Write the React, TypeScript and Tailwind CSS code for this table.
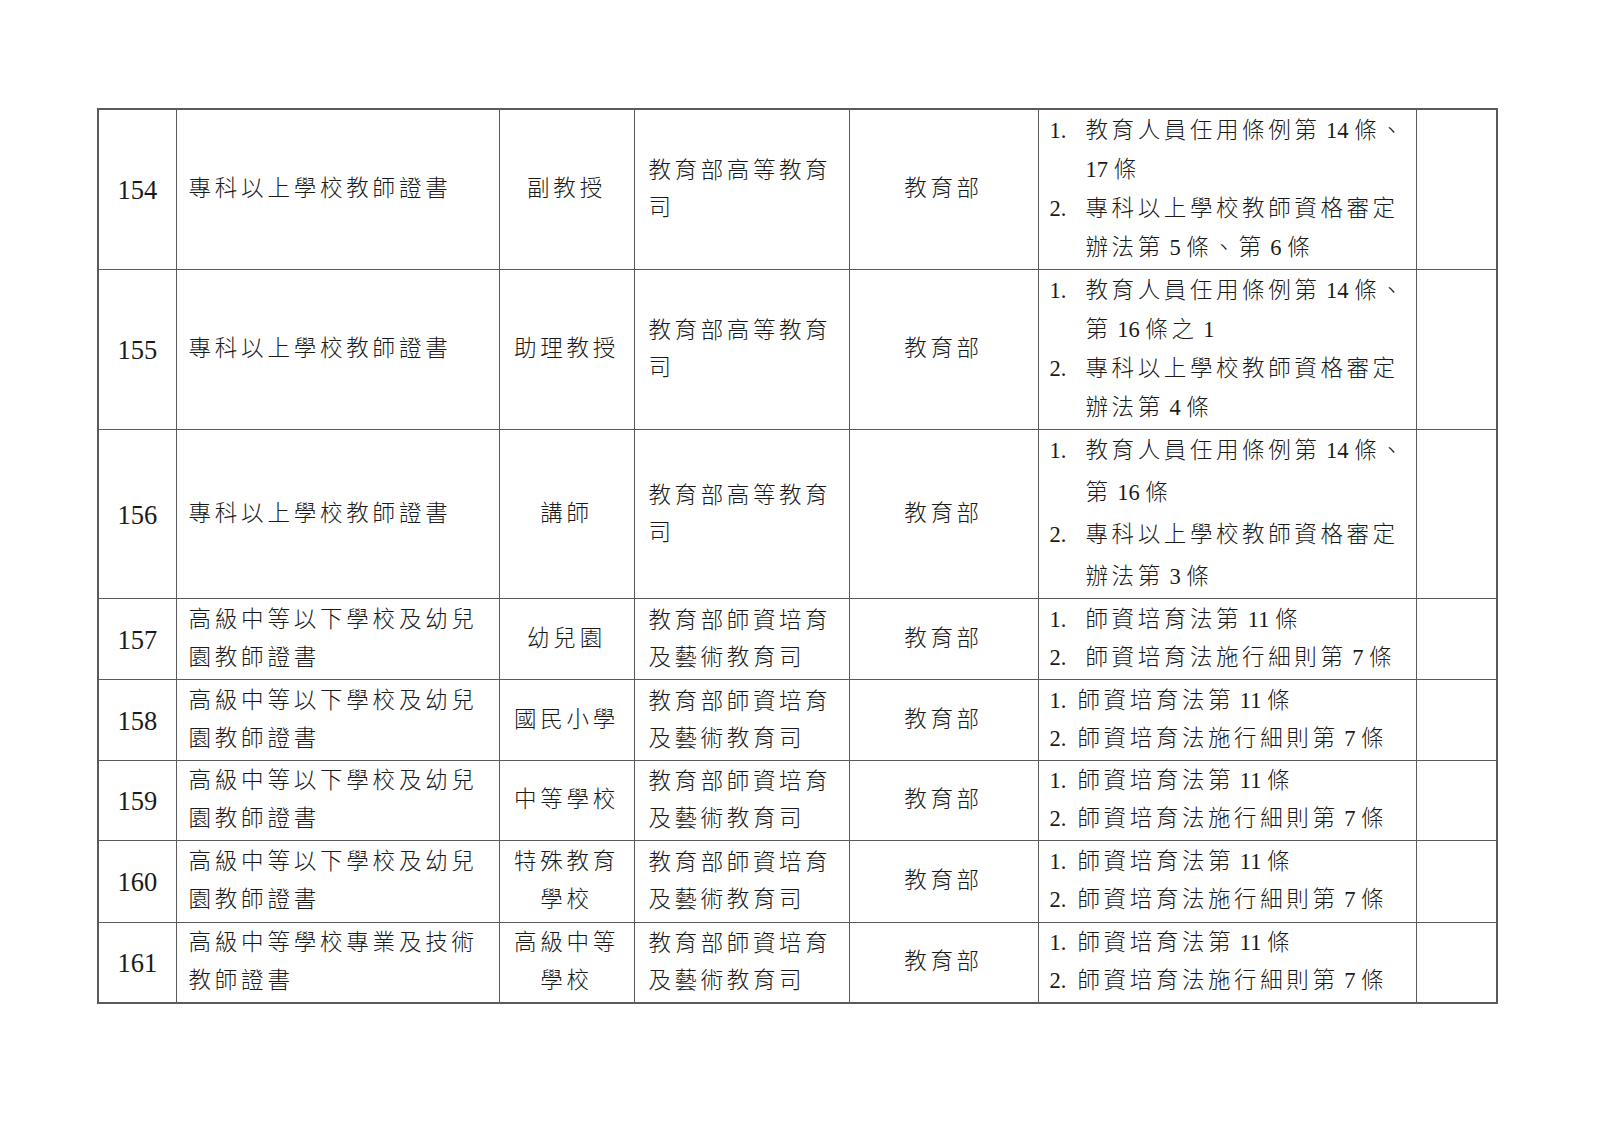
import React from "react";

type Row = {
  no: string;
  name: string[];
  kind: string[];
  office: string[];
  dept: string;
  law: [string, string[]][];
  h: string;
  lh: string;
  mark: string;
};

const rows: Row[] = [
  {
    no: "154",
    name: ["專科以上學校教師證書"],
    kind: ["副教授"],
    office: ["教育部高等教育", "司"],
    dept: "教育部",
    law: [
      ["1.", ["教育人員任用條例第 14 條、", "17 條"]],
      ["2.", ["專科以上學校教師資格審定", "辦法第 5 條、第 6 條"]],
    ],
    h: "h-[160px]",
    lh: "leading-[39px]",
    mark: "w-[36px]",
  },
  {
    no: "155",
    name: ["專科以上學校教師證書"],
    kind: ["助理教授"],
    office: ["教育部高等教育", "司"],
    dept: "教育部",
    law: [
      ["1.", ["教育人員任用條例第 14 條、", "第 16 條之 1"]],
      ["2.", ["專科以上學校教師資格審定", "辦法第 4 條"]],
    ],
    h: "h-[160px]",
    lh: "leading-[39px]",
    mark: "w-[36px]",
  },
  {
    no: "156",
    name: ["專科以上學校教師證書"],
    kind: ["講師"],
    office: ["教育部高等教育", "司"],
    dept: "教育部",
    law: [
      ["1.", ["教育人員任用條例第 14 條、", "第 16 條"]],
      ["2.", ["專科以上學校教師資格審定", "辦法第 3 條"]],
    ],
    h: "h-[168px]",
    lh: "leading-[42px]",
    mark: "w-[36px]",
  },
  {
    no: "157",
    name: ["高級中等以下學校及幼兒", "園教師證書"],
    kind: ["幼兒園"],
    office: ["教育部師資培育", "及藝術教育司"],
    dept: "教育部",
    law: [
      ["1.", ["師資培育法第 11 條"]],
      ["2.", ["師資培育法施行細則第 7 條"]],
    ],
    h: "h-[81px]",
    lh: "leading-[38px]",
    mark: "w-[36px]",
  },
  {
    no: "158",
    name: ["高級中等以下學校及幼兒", "園教師證書"],
    kind: ["國民小學"],
    office: ["教育部師資培育", "及藝術教育司"],
    dept: "教育部",
    law: [
      ["1.", ["師資培育法第 11 條"]],
      ["2.", ["師資培育法施行細則第 7 條"]],
    ],
    h: "h-[81px]",
    lh: "leading-[38px]",
    mark: "w-[28px]",
  },
  {
    no: "159",
    name: ["高級中等以下學校及幼兒", "園教師證書"],
    kind: ["中等學校"],
    office: ["教育部師資培育", "及藝術教育司"],
    dept: "教育部",
    law: [
      ["1.", ["師資培育法第 11 條"]],
      ["2.", ["師資培育法施行細則第 7 條"]],
    ],
    h: "h-[80px]",
    lh: "leading-[38px]",
    mark: "w-[28px]",
  },
  {
    no: "160",
    name: ["高級中等以下學校及幼兒", "園教師證書"],
    kind: ["特殊教育", "學校"],
    office: ["教育部師資培育", "及藝術教育司"],
    dept: "教育部",
    law: [
      ["1.", ["師資培育法第 11 條"]],
      ["2.", ["師資培育法施行細則第 7 條"]],
    ],
    h: "h-[82px]",
    lh: "leading-[38px]",
    mark: "w-[28px]",
  },
  {
    no: "161",
    name: ["高級中等學校專業及技術", "教師證書"],
    kind: ["高級中等", "學校"],
    office: ["教育部師資培育", "及藝術教育司"],
    dept: "教育部",
    law: [
      ["1.", ["師資培育法第 11 條"]],
      ["2.", ["師資培育法施行細則第 7 條"]],
    ],
    h: "h-[81px]",
    lh: "leading-[38px]",
    mark: "w-[28px]",
  },
];

const cell = "border border-[#5a5a5a] align-middle p-0";

// digits (and the spaces around them) keep natural spacing, CJK gets wide tracking
function Text({ s }: { s: string }) {
  return (
    <>
      {s.split(/( ?\d+ ?)/).map((part, i) =>
        /\d/.test(part) ? (
          <span key={i} className="tracking-normal">
            {part}
          </span>
        ) : (
          <span key={i}>{part}</span>
        )
      )}
    </>
  );
}

function Lines({ lines }: { lines: string[] }) {
  return (
    <>
      {lines.map((l) => (
        <div key={l} className="whitespace-pre">
          <Text s={l} />
        </div>
      ))}
    </>
  );
}

export default function App() {
  return (
    <div
      className="bg-white pb-[60px] pl-[97px] pt-[108px] text-[#1a1a1a]"
      style={{ fontFamily: '"Liberation Serif", "Noto Sans CJK TC", serif' }}
    >
      <table className="w-[1399px] table-fixed border-collapse border-2 border-[#5a5a5a] text-[22.5px] font-light tracking-[3.6px]">
        <colgroup>
          <col className="w-[78px]" />
          <col className="w-[323px]" />
          <col className="w-[135px]" />
          <col className="w-[215px]" />
          <col className="w-[189px]" />
          <col className="w-[378px]" />
          <col className="w-[81px]" />
        </colgroup>
        <tbody>
          {rows.map((r) => (
            <tr key={r.no} className={r.h}>
              <td className={`${cell} pt-[4px] text-center text-[26.5px] tracking-normal`}>{r.no}</td>
              <td className={`${cell} pl-[12px] leading-[38px] tracking-[3.8px]`}>
                <Lines lines={r.name} />
              </td>
              <td className={`${cell} text-center leading-[38px] tracking-[3.8px]`}>
                <Lines lines={r.kind} />
              </td>
              <td className={`${cell} pl-[14px] leading-[37px]`}>
                <Lines lines={r.office} />
              </td>
              <td className={`${cell} text-center`}>{r.dept}</td>
              <td className={`${cell} pl-[11px] ${r.lh}`}>
                {r.law.map(([m, ls]) => (
                  <div key={m} className="flex">
                    <span className={`${r.mark} shrink-0 tracking-normal`}>{m}</span>
                    <div>
                      <Lines lines={ls} />
                    </div>
                  </div>
                ))}
              </td>
              <td className={cell}></td>
            </tr>
          ))}
        </tbody>
      </table>
    </div>
  );
}
